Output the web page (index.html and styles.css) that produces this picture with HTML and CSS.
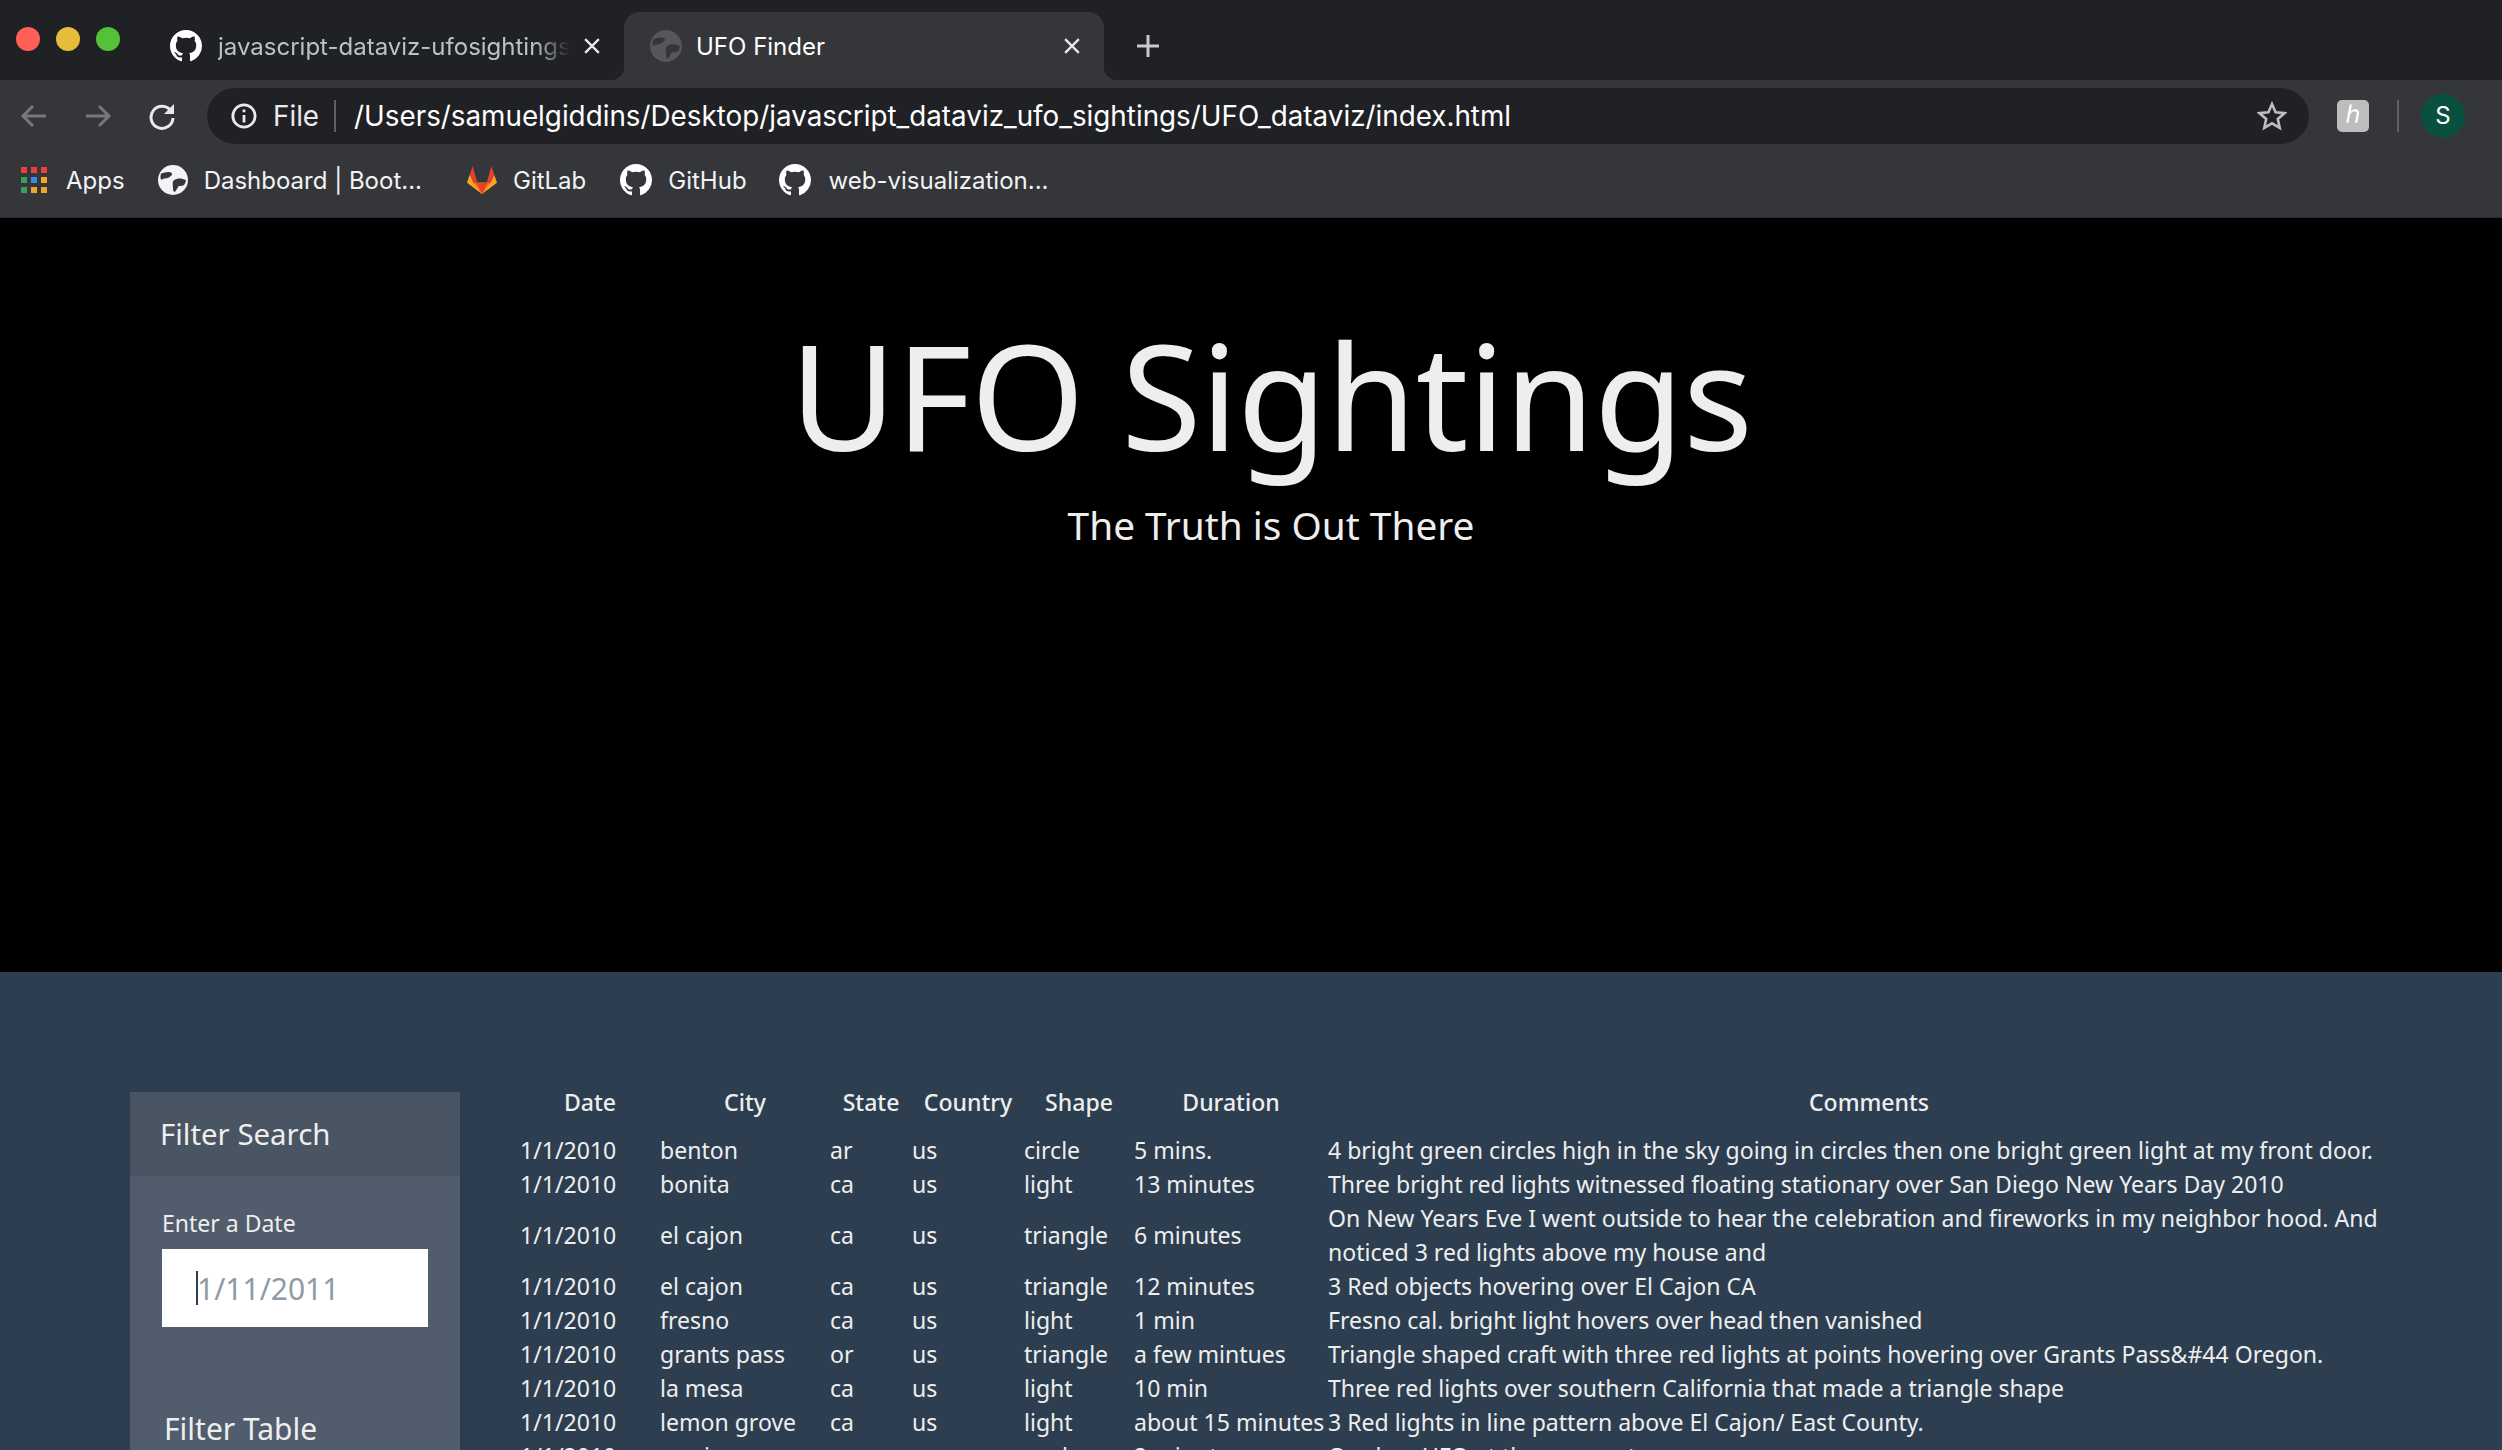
FILE: index.html
```html
<!DOCTYPE html>
<html lang="en">
<head>
    <meta charset="UTF-8">
    <title>UFO Finder</title>
    <link rel="stylesheet" href="styles.css">
</head>
<body>
<svg class="defs" width="0" height="0">
    <symbol id="octo" viewBox="0 0 16 16">
        <path fill="#fff" fill-rule="evenodd" d="M8 0C3.58 0 0 3.58 0 8c0 3.54 2.29 6.53 5.47 7.59.4.07.55-.17.55-.38 0-.19-.01-.82-.01-1.49-2.01.37-2.53-.49-2.69-.94-.09-.23-.48-.94-.82-1.13-.28-.15-.68-.52-.01-.53.63-.01 1.08.58 1.23.82.72 1.21 1.87.87 2.33.66.07-.52.28-.87.51-1.07-1.78-.2-3.64-.89-3.64-3.95 0-.87.31-1.59.82-2.15-.08-.2-.36-1.02.08-2.12 0 0 .67-.21 2.2.82.64-.18 1.32-.27 2-.27s1.36.09 2 .27c1.53-1.04 2.2-.82 2.2-.82.44 1.1.16 1.92.08 2.12.51.56.82 1.27.82 2.15 0 3.07-1.87 3.75-3.65 3.95.29.25.54.73.54 1.48 0 1.07-.01 1.93-.01 2.2 0 .21.15.46.55.38A8.01 8.01 0 0 0 16 8c0-4.42-3.58-8-8-8z"/>
    </symbol>
    <symbol id="globe" viewBox="0 0 28 28">
        <circle cx="14" cy="14" r="14" fill="currentColor"/>
        <path fill="#35363a" d="M3 8c3-1 6-2 9-1 2 1 1 3-1 4-2 2-5 1-8 3-1-2-1-4 0-6zM15 14c3-2 7-2 11 0 0 2-1 4-2 5-2 1-4 0-5 1-1 2-2 3-3 5-2 0-2-2-2-4 0-2-1-5 1-7z"/>
    </symbol>
</svg>

<header class="browser">
    <div class="tabstrip">
        <div class="lights">
            <span class="light red"></span>
            <span class="light yellow"></span>
            <span class="light green"></span>
        </div>
        <div class="tab">
            <svg class="tab-icon"><use href="#octo"/></svg>
            <span class="tab-title fade">javascript-dataviz-ufosightings</span>
            <svg class="tab-close" viewBox="0 0 14 14"><path d="M1 1l12 12M13 1L1 13"/></svg>
        </div>
        <div class="tab active">
            <svg class="tab-icon dim"><use href="#globe"/></svg>
            <span class="tab-title">UFO Finder</span>
            <svg class="tab-close" viewBox="0 0 14 14"><path d="M1 1l12 12M13 1L1 13"/></svg>
        </div>
        <svg class="new-tab" viewBox="0 0 24 24"><path d="M12 1v22M1 12h22"/></svg>
    </div>

    <div class="toolbar">
        <svg class="nav-icon off" viewBox="0 0 28 28"><path d="M26 14H3M13 4L3 14l10 10"/></svg>
        <svg class="nav-icon off" viewBox="0 0 28 28"><path d="M2 14h23M15 4l10 10-10 10"/></svg>
        <svg class="nav-icon" viewBox="0 0 28 28"><path d="M23 9a11 11 0 1 0 2 7"/><path class="solid" d="M26 2v10H16z"/></svg>
        <div class="omnibox">
            <svg class="info" viewBox="0 0 28 28"><circle cx="14" cy="14" r="12"/><path d="M14 13v8M14 7v3"/></svg>
            <span class="file">File</span>
            <span class="omni-sep"></span>
            <span class="url">/Users/samuelgiddins/Desktop/javascript_dataviz_ufo_sightings/UFO_dataviz/index.html</span>
            <svg class="star" viewBox="0 0 30 30"><path d="M15 3l3.6 8.2 8.9.9-6.7 5.9 1.9 8.8-7.7-4.5-7.7 4.5 1.9-8.8L2.5 12.100l8.900-.9z"/></svg>
        </div>
        <span class="ext">ℎ</span>
        <span class="tool-sep"></span>
        <span class="avatar">S</span>
    </div>

    <nav class="bookmarks">
        <a class="mark apps">
            <span class="dots">
                <i class="r"></i><i class="r"></i><i class="r"></i>
                <i class="g"></i><i class="b"></i><i class="o"></i>
                <i class="g"></i><i class="o"></i><i class="o"></i>
            </span>
            Apps
        </a>
        <a class="mark dash"><svg class="mark-icon"><use href="#globe"/></svg>Dashboard | Boot...</a>
        <a class="mark lab">
            <svg class="mark-icon" viewBox="0 0 32 30">
                <path fill="#fca326" d="M16 30L0 18l3-9 4 9h18l4-9 3 9z"/>
                <path fill="#fc6d26" d="M16 30L7 18h18z"/>
                <path fill="#e24329" d="M16 30l-6-12h12zM7 18L3 9 6 0l5 18zM25 18l4-9-3-9-5 18z"/>
            </svg>
            GitLab
        </a>
        <a class="mark hub"><svg class="mark-icon"><use href="#octo"/></svg>GitHub</a>
        <a class="mark"><svg class="mark-icon"><use href="#octo"/></svg>web-visualization...</a>
    </nav>
</header>

<section class="hero">
    <h1>UFO Sightings</h1>
    <p>The Truth is Out There</p>
</section>

<main class="content">
    <aside class="panel">
        <h3 class="panel-head">Filter Search</h3>
        <div class="panel-body">
            <label for="date">Enter a Date</label>
            <div class="field">
                <input type="text" id="date" placeholder="1/11/2011">
                <span class="caret"></span>
            </div>
            <h3 class="filter-title">Filter Table</h3>
        </div>
    </aside>

    <table class="sightings">
        <thead>
            <tr>
                <th>Date</th><th>City</th><th>State</th><th>Country</th><th>Shape</th><th>Duration</th><th>Comments</th>
            </tr>
        </thead>
        <tbody>
            <tr><td>1/1/2010</td><td>benton</td><td>ar</td><td>us</td><td>circle</td><td>5 mins.</td><td>4 bright green circles high in the sky going in circles then one bright green light at my front door.</td></tr>
            <tr><td>1/1/2010</td><td>bonita</td><td>ca</td><td>us</td><td>light</td><td>13 minutes</td><td>Three bright red lights witnessed floating stationary over San Diego New Years Day 2010</td></tr>
            <tr><td>1/1/2010</td><td>el cajon</td><td>ca</td><td>us</td><td>triangle</td><td>6 minutes</td><td>On New Years Eve I went outside to hear the celebration and fireworks in my neighbor hood. And noticed 3 red lights above my house and</td></tr>
            <tr><td>1/1/2010</td><td>el cajon</td><td>ca</td><td>us</td><td>triangle</td><td>12 minutes</td><td>3 Red objects hovering over El Cajon CA</td></tr>
            <tr><td>1/1/2010</td><td>fresno</td><td>ca</td><td>us</td><td>light</td><td>1 min</td><td>Fresno cal. bright light hovers over head then vanished</td></tr>
            <tr><td>1/1/2010</td><td>grants pass</td><td>or</td><td>us</td><td>triangle</td><td>a few mintues</td><td>Triangle shaped craft with three red lights at points hovering over Grants Pass&amp;#44 Oregon.</td></tr>
            <tr><td>1/1/2010</td><td>la mesa</td><td>ca</td><td>us</td><td>light</td><td>10 min</td><td>Three red lights over southern California that made a triangle shape</td></tr>
            <tr><td>1/1/2010</td><td>lemon grove</td><td>ca</td><td>us</td><td>light</td><td>about 15 minutes</td><td>3 Red lights in line pattern above El Cajon/ East County.</td></tr>
            <tr><td>1/1/2010</td><td>marion</td><td>ca</td><td>us</td><td>oval</td><td>2 minutes</td><td>Orydam UFO at the moment</td></tr>
        </tbody>
    </table>
</main>
</body>
</html>
```
FILE: styles.css
```css
html, body {
    margin: 0;
    height: 1450px;
    overflow: hidden;
}
body {
    background: #2d3e50;
    font-family: "Noto Sans", sans-serif;
}
.defs {
    position: absolute;
}

/* browser chrome */
.browser {
    font-family: Inter, sans-serif;
    background: #35363a;
    height: 218px;
    border-bottom: 1px solid #2a2b2e;
    box-sizing: border-box;
}
.tabstrip {
    height: 80px;
    background: #202124;
    display: flex;
    align-items: flex-end;
}
.lights {
    display: flex;
    gap: 16px;
    padding-left: 16px;
    width: 128px;
    align-self: flex-start;
    margin-top: 27px;
}
.light {
    width: 24px;
    height: 24px;
    border-radius: 50%;
}
.red { background: #ff5f57; }
.yellow { background: #e5bd3b; }
.green { background: #55c03a; }
.tab {
    width: 480px;
    height: 68px;
    display: flex;
    align-items: center;
    padding: 0 24px 0 26px;
    box-sizing: border-box;
    color: #bdc1c6;
    font-size: 24px;
    position: relative;
}
.tab.active {
    background: #35363a;
    color: #fff;
    border-radius: 16px 16px 0 0;
}
.tab.active::before, .tab.active::after {
    content: "";
    position: absolute;
    bottom: 0;
    width: 14px;
    height: 14px;
}
.tab.active::before {
    left: -14px;
    background: radial-gradient(circle at 0 0, #202124 14px, #35363a 15px);
}
.tab.active::after {
    right: -14px;
    background: radial-gradient(circle at 100% 0, #202124 14px, #35363a 15px);
}
.tab-icon {
    width: 32px;
    height: 32px;
    margin-right: 16px;
    flex: none;
}
.tab-icon.dim {
    color: #55575c;
}
.tab.active .tab-icon {
    margin-left: 0;
    margin-right: 14px;
}
.tab-title {
    flex: 1;
    white-space: nowrap;
    overflow: hidden;
}
.fade {
    -webkit-mask-image: linear-gradient(to right, #000 90%, transparent);
    mask-image: linear-gradient(to right, #000 90%, transparent);
}
.tab-close {
    width: 16px;
    height: 16px;
    margin-left: 14px;
    fill: none;
    stroke: #e8eaed;
    stroke-width: 2;
}
.tab:first-of-type .tab-close {
    margin-right: -2px;
}
.new-tab {
    width: 24px;
    height: 24px;
    margin: 0 0 22px 32px;
    fill: none;
    stroke: #c8cacd;
    stroke-width: 3;
}
.toolbar {
    height: 64px;
    box-sizing: border-box;
    padding-top: 8px;
    display: flex;
    align-items: center;
    padding-left: 20px;
}
.nav-icon {
    width: 28px;
    height: 28px;
    margin-right: 36px;
    fill: none;
    stroke: #e8eaed;
    stroke-width: 3;
}
.nav-icon.off {
    stroke: #77787b;
}
.nav-icon .solid {
    fill: #e8eaed;
    stroke: none;
}
.nav-icon:nth-child(3) {
    margin-right: 31px;
}
.omnibox {
    width: 2102px;
    height: 56px;
    background: #202124;
    border-radius: 28px;
    display: flex;
    align-items: center;
    padding-left: 24px;
    box-sizing: border-box;
    color: #fff;
    font-size: 27.8px;
}
.info {
    width: 26px;
    height: 26px;
    fill: none;
    stroke: #e8eaed;
    stroke-width: 3;
    margin-right: 16px;
}
.file {
    color: #e8eaed;
}
.omni-sep {
    width: 2px;
    height: 32px;
    background: #5f6063;
    margin: 0 18px 0 15px;
}
.url {
    flex: 1;
    white-space: nowrap;
}
.star {
    width: 30px;
    height: 30px;
    fill: none;
    stroke: #bdbdbd;
    stroke-width: 2.600;
    margin-right: 22px;
}
.ext {
    width: 32px;
    height: 32px;
    margin-left: 28px;
    background: #bdbdbd;
    border-radius: 5px;
    color: #fff;
    font-size: 24px;
    line-height: 30px;
    text-align: center;
    font-family: "DejaVu Sans", sans-serif;
}
.tool-sep {
    width: 2px;
    height: 32px;
    background: #5f6063;
    margin: 0 22px 0 28px;
}
.avatar {
    width: 44px;
    height: 44px;
    border-radius: 50%;
    background: #0a5040;
    color: #fff;
    font-size: 24px;
    line-height: 44px;
    text-align: center;
}
.bookmarks {
    height: 72px;
    display: flex;
    align-items: center;
    padding-left: 21px;
    font-size: 24px;
    color: #f1f3f4;
    white-space: nowrap;
}
.mark {
    display: flex;
    align-items: center;
    margin-right: 34px;
}
.apps { margin-right: 33px; }
.dash { margin-right: 45px; }
.hub { margin-right: 32px; }
.mark-icon {
    width: 30px;
    height: 30px;
    margin-right: 16px;
    color: #f1f3f4;
}
.hub .mark-icon, .mark:last-child .mark-icon {
    width: 32px;
    height: 32px;
}
.mark:last-child .mark-icon {
    margin-right: 18px;
}
.dots {
    display: grid;
    grid-template-columns: repeat(3, 6px);
    gap: 4px;
    margin-right: 19px;
}
.dots i {
    width: 6px;
    height: 6px;
}
.dots .r { background: #ea3f3a; }
.dots .g { background: #3d9e5c; }
.dots .b { background: #2e8fe6; }
.dots .o { background: #f2a529; }

/* jumbotron */
.hero {
    height: 754px;
    background: #000;
    color: #eee;
    text-align: center;
    padding-left: 40px;
    box-sizing: border-box;
    overflow: hidden;
}
.hero h1 {
    margin: 82px 0 0;
    font-size: 146px;
    font-weight: 400;
    letter-spacing: -0.8px;
    line-height: 190px;
}
.hero p {
    margin: 10px 0 0;
    font-size: 38.8px;
    line-height: 50px;
}

/* filter and table */
.content {
    display: flex;
    align-items: flex-start;
    gap: 60px;
    padding: 113px 0 0 130px;
    color: #eee;
}
.panel {
    width: 330px;
    flex: none;
    margin-top: 7px;
    background: #515d6d;
}
.panel-head {
    margin: 0;
    height: 84px;
    padding-left: 30px;
    background: #4a5564;
    font-size: 29.4px;
    font-weight: 400;
    line-height: 84px;
}
.panel-body {
    padding: 30px 32px 200px;
}
.panel-body label {
    display: block;
    font-size: 23px;
    line-height: 34px;
    margin-bottom: 9px;
}
.field {
    position: relative;
}
.field input {
    display: block;
    width: 100%;
    height: 78px;
    box-sizing: border-box;
    border: 0;
    border-radius: 0;
    padding: 0 0 0 35px;
    background: #fff;
    font-family: inherit;
    font-size: 30px;
}
.field input::placeholder {
    color: #8f9aa5;
    opacity: 1;
}
.caret {
    position: absolute;
    left: 34px;
    top: 22px;
    width: 2px;
    height: 34px;
    background: #2d3e50;
}
.filter-title {
    margin: 80px 0 0 2px;
    font-size: 30px;
    font-weight: 400;
    line-height: 44px;
}
.sightings {
    width: 1890px;
    table-layout: fixed;
    border-collapse: collapse;
    font-size: 23.05px;
    line-height: 34px;
}
.sightings th {
    padding: 0 0 14px;
    font-weight: 500;
    text-align: center;
}
.sightings td {
    padding: 0;
    text-align: left;
}
.sightings th:nth-child(1) { width: 140px; }
.sightings th:nth-child(2) { width: 170px; }
.sightings th:nth-child(3) { width: 82px; }
.sightings th:nth-child(4) { width: 112px; }
.sightings th:nth-child(5) { width: 110px; }
.sightings th:nth-child(6) { width: 194px; }
```
